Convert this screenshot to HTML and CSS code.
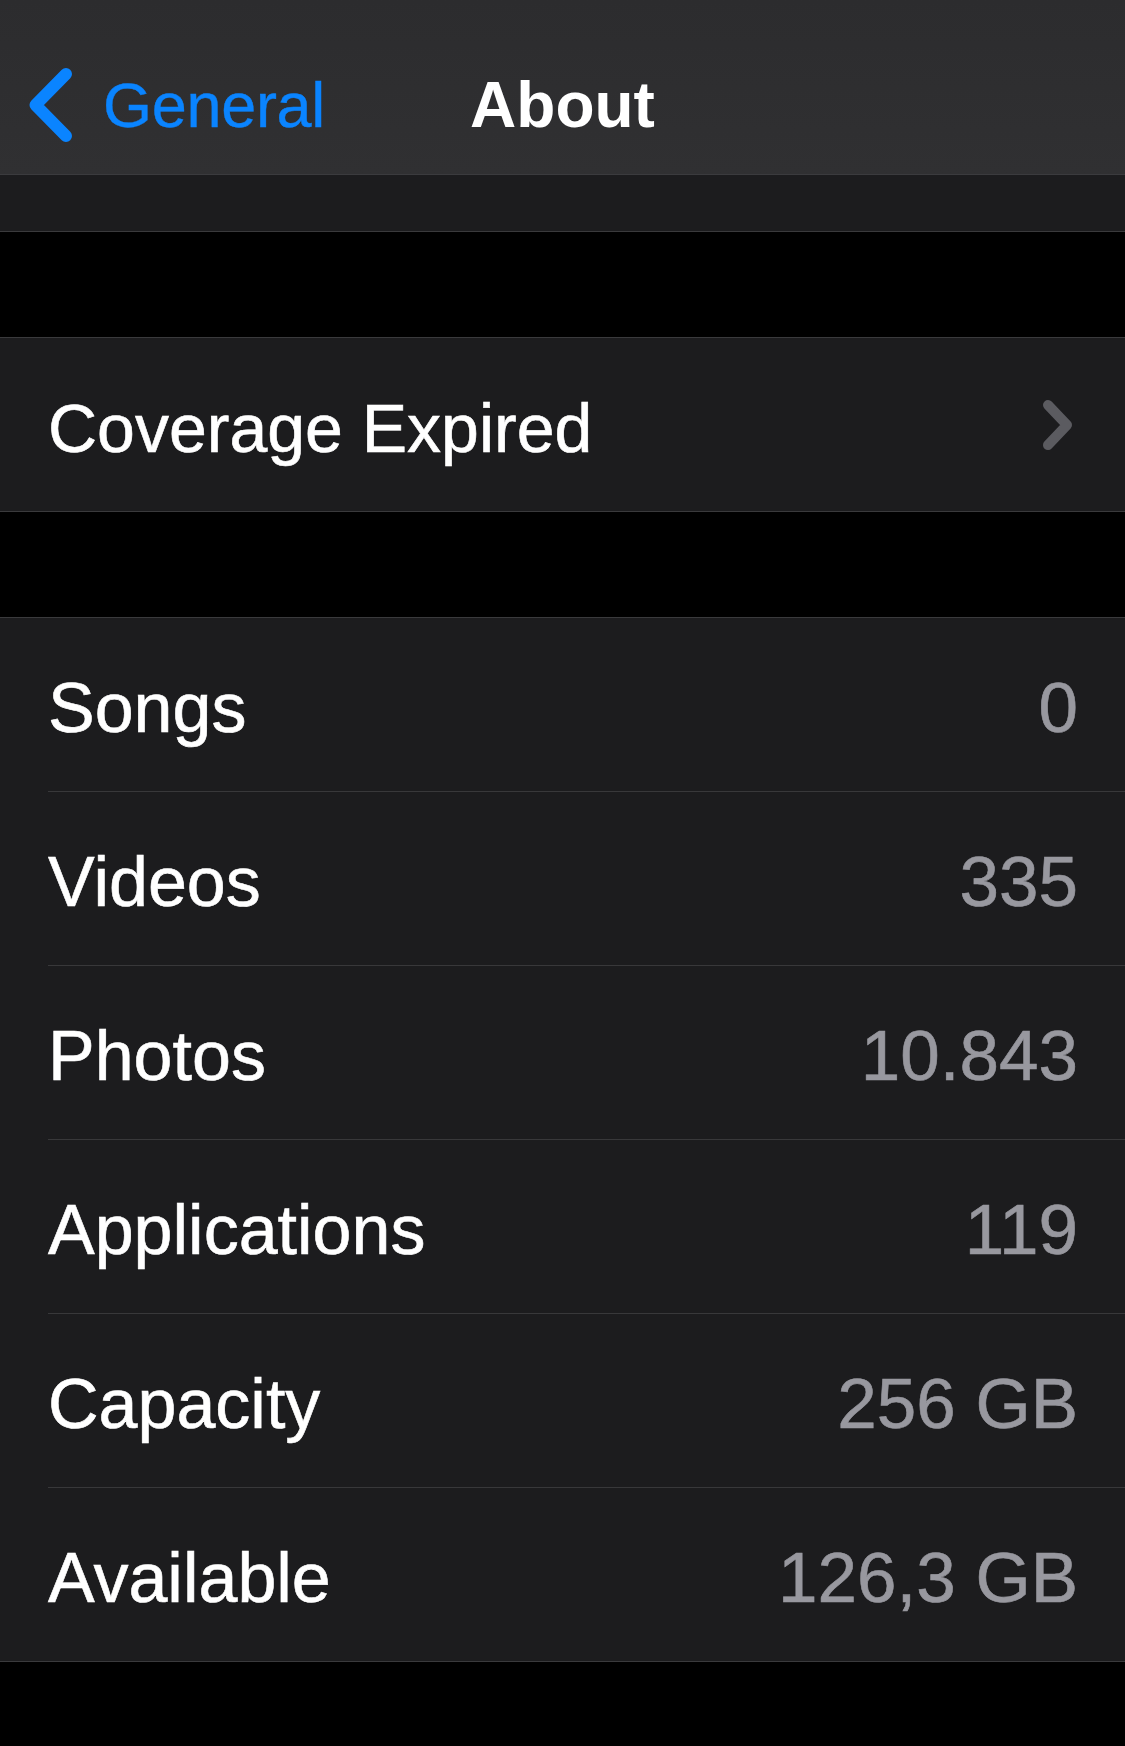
FILE: index.html
```html
<!DOCTYPE html>
<html lang="en">
<head>
<meta charset="utf-8">
<title>About</title>
<link rel="stylesheet" href="styles.css">
</head>
<body>
<header class="nav">
  <div class="nav-left">
    <svg class="back-chevron" width="44" height="74" viewBox="0 0 44 74" aria-hidden="true">
      <path d="M37 6 L6.5 37 L37 68" fill="none" stroke="#0a84ff" stroke-width="12" stroke-linecap="round" stroke-linejoin="round"/>
    </svg>
    <span class="back-label">General</span>
  </div>
  <h1 class="nav-title">About</h1>
  <div class="nav-right"></div>
</header>
<div class="strip"></div>
<div class="spacer"></div>
<section class="group">
  <div class="cell">
    <div class="cell-inner">
      <span class="label label-wide">Coverage Expired</span>
      <svg class="chevron" width="30" height="50" viewBox="0 0 30 50" aria-hidden="true">
        <path d="M5 5 L24 25 L5 45" fill="none" stroke="#5b5b60" stroke-width="10" stroke-linecap="round" stroke-linejoin="round"/>
      </svg>
    </div>
  </div>
</section>
<div class="spacer"></div>
<section class="group">
  <div class="cell"><div class="cell-inner"><span class="label">Songs</span><span class="value">0</span></div></div>
  <div class="cell"><div class="cell-inner"><span class="label">Videos</span><span class="value">335</span></div></div>
  <div class="cell"><div class="cell-inner"><span class="label">Photos</span><span class="value">10.843</span></div></div>
  <div class="cell"><div class="cell-inner"><span class="label">Applications</span><span class="value">119</span></div></div>
  <div class="cell"><div class="cell-inner"><span class="label">Capacity</span><span class="value">256 GB</span></div></div>
  <div class="cell"><div class="cell-inner"><span class="label">Available</span><span class="value">126,3 GB</span></div></div>
</section>
</body>
</html>
```

FILE: styles.css
```css
* {
  box-sizing: border-box;
}

html, body {
  margin: 0;
  padding: 0;
  background: #000;
}

body {
  font-family: "Liberation Sans", Arial, sans-serif;
  color: #fff;
  width: 1125px;
  min-height: 1746px;
}

.nav {
  height: 175px;
  background: linear-gradient(180deg, #2c2c2e 0%, #303032 100%);
  border-bottom: 1px solid #3b3b3e;
  display: grid;
  grid-template-columns: 1fr auto 1fr;
  align-items: center;
  padding-top: 36px;
}

.nav-left {
  display: flex;
  align-items: center;
  padding-left: 29px;
  gap: 30px;
}

.back-chevron {
  display: block;
  flex: none;
}

.back-label {
  color: #0a84ff;
  font-size: 63px;
  line-height: 1;
  letter-spacing: -0.3px;
  -webkit-text-stroke: 0.4px #0a84ff;
}

.nav-title {
  margin: 0;
  font-size: 64px;
  font-weight: 700;
  line-height: 1;
  color: #fff;
}

.strip {
  height: 57px;
  background: #1c1c1e;
  border-bottom: 1px solid #3a3a3c;
}

.spacer {
  height: 105px;
  background: #000;
}

.group {
  background: #1c1c1e;
  border-top: 1px solid #3a3a3c;
  border-bottom: 1px solid #3a3a3c;
}

.cell {
  padding-left: 48px;
}

.cell-inner {
  height: 174px;
  display: flex;
  align-items: center;
  justify-content: space-between;
  padding-right: 47px;
  padding-top: 6px;
  border-bottom: 1px solid #38383a;
}

.cell:last-child .cell-inner {
  border-bottom: none;
  height: 173px;
}

.label {
  font-size: 70px;
  line-height: 1;
  color: #fff;
  -webkit-text-stroke: 0.6px #fff;
}

.label-wide {
  font-size: 68px;
}

.value {
  font-size: 71px;
  line-height: 1;
  color: #98989f;
  -webkit-text-stroke: 0.6px #98989f;
}

.chevron {
  display: block;
  margin-right: 5px;
  margin-top: -6px;
}
```
